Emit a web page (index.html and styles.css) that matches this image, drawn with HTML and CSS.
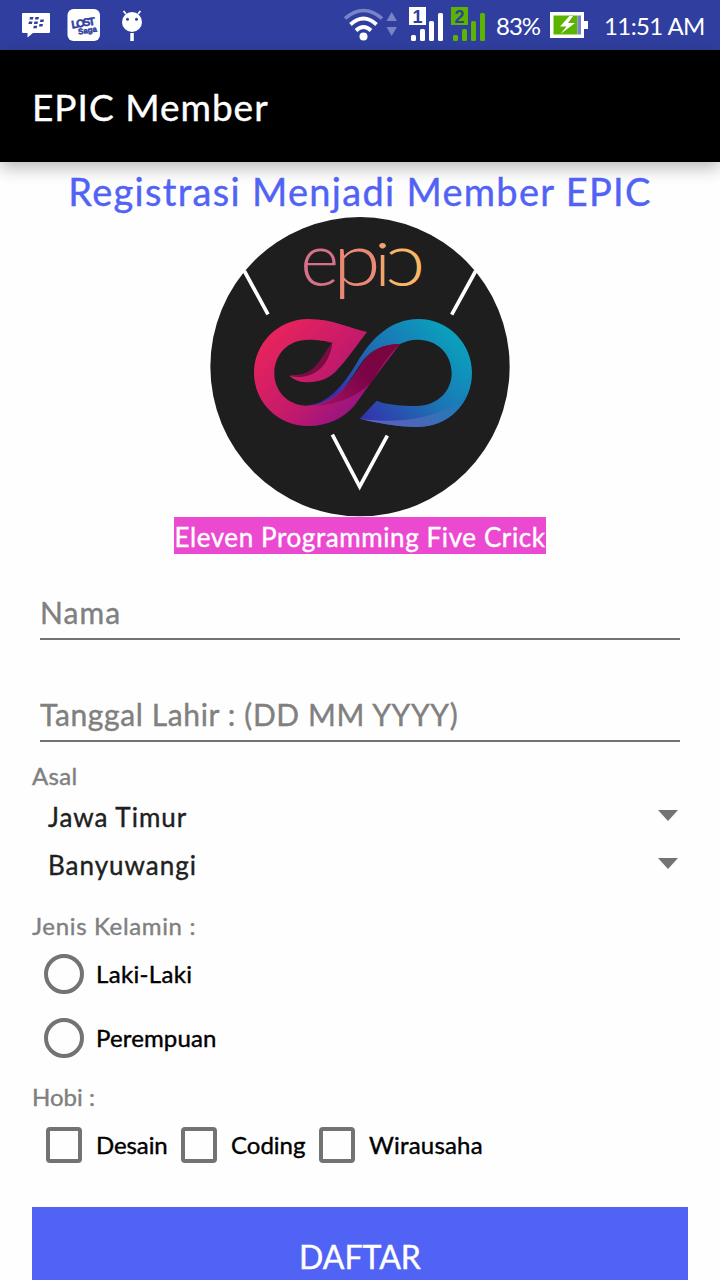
FILE: index.html
```html
<!DOCTYPE html>
<html lang="id">
<head>
<meta charset="utf-8">
<title>EPIC Member</title>
<link rel="stylesheet" href="styles.css">
</head>
<body>
<div class="status">
  <svg class="notifications" width="160" height="50" viewBox="0 0 160 50">
    <path fill="#fff" d="M23 13h26q1 0 1 1v18q0 1-1 1H33l-5.500 4.500V33H23q-1 0-1-1V14q0-1 1-1z"/>
    <g fill="#303f9f"><path d="M30 17h3.500l-.6 2.500h-3.500zM35.500 17H39l-.6 2.500h-3.500zM29 21.500h3.500l-.6 2.500h-3.500zM34.500 21.500H38l-.6 2.500h-3.500zM40.500 19.500H44l-.6 2.500h-3.500zM39.500 24H43l-.6 2.500h-3.500zM33.800 25.700h3.500l-.6 2.500h-3.500z"/></g>
    <rect x="67.500" y="9" width="32.500" height="32" rx="6" fill="#fff"/>
    <g transform="rotate(-9 84 25)" class="game"><text x="71.500" y="26.500" textLength="24">LOST</text><text x="77" y="33.500" class="game-sub" textLength="19">Saga</text></g>
    <g fill="#fff"><circle cx="132" cy="22" r="10"/><rect x="130.300" y="33" width="3.500" height="8"/><path d="M126 14l-2.500-3M138 14l2.500-3" stroke="#fff" stroke-width="1.800"/></g>
    <circle cx="127.500" cy="19.300" r="1.500" fill="#303f9f"/><circle cx="136.500" cy="19.300" r="1.500" fill="#303f9f"/>
  </svg>
  <svg class="signals" width="150" height="50" viewBox="340 0 150 50">
    <g fill="none" stroke-linecap="butt">
      <path d="M345 18.500q18.500-16 37 0" stroke="#7883c8" stroke-width="3.500"/>
      <path d="M350.500 24.500q13-12 26 0M356 30.500q7.500-7 15 0" stroke="#fff" stroke-width="3.800"/>
    </g>
    <circle cx="363.500" cy="36.500" r="4" fill="#fff"/>
    <path fill="#7883c8" d="M386.500 21l5.200-9 5.200 9zM386.500 27h10.400l-5.200 9z"/>
    <g fill="#fff"><rect x="409" y="7" width="17" height="18"/><rect x="411" y="35" width="5" height="6" rx="1.500"/><rect x="420" y="29" width="5" height="12" rx="1.500"/><rect x="429" y="21" width="5" height="20" rx="1.500"/><rect x="438" y="13" width="5" height="28" rx="1.500"/></g>
    <g fill="#5cb400"><rect x="451" y="7" width="17" height="18"/><rect x="453" y="35" width="5" height="6" rx="1.500"/><rect x="462" y="29" width="5" height="12" rx="1.500"/><rect x="471" y="21" width="5" height="20" rx="1.500"/><rect x="480" y="13" width="5" height="28" rx="1.500"/></g>
    <text class="sim" x="417.500" y="22.500">1</text><text class="sim" x="459.500" y="22.500">2</text>
  </svg>
  <span class="percent">83%</span>
  <svg class="battery" width="38" height="28" viewBox="550 11 38 28">
    <path fill="#fff" d="M550 12h34v9h4v8h-4v9h-34z"/><path fill="#5cb400" d="M553.500 15.500h24v19h-24z"/><path fill="#7883c8" d="M577.500 15.500h3.500v19h-3.500z"/>
    <path fill="#fff" d="M569.500 16l-9.500 10.500h6.500l-6 7.500L575 23h-7l5-7z"/>
  </svg>
  <span class="clock">11:51 AM</span>
</div>
<header class="appbar"><span class="app-title">EPIC Member</span></header>
<main class="page">
  <h1 class="heading"><span>Registrasi Menjadi Member EPIC</span></h1>
  <svg class="logo" width="300" height="300" viewBox="30 21 900 900">
    <defs>
      <linearGradient id="pink" gradientUnits="userSpaceOnUse" x1="190" y1="380" x2="470" y2="640"><stop offset="0" stop-color="#e9245c"/><stop offset=".55" stop-color="#c41a6b"/><stop offset="1" stop-color="#8e1385"/></linearGradient>
      <linearGradient id="blue" gradientUnits="userSpaceOnUse" x1="770" y1="370" x2="490" y2="640"><stop offset="0" stop-color="#09a2bd"/><stop offset=".5" stop-color="#1c73b4"/><stop offset="1" stop-color="#352fab"/></linearGradient>
      <linearGradient id="ribbon" gradientUnits="userSpaceOnUse" x1="360" y1="600" x2="580" y2="410"><stop offset="0" stop-color="#a01362"/><stop offset=".6" stop-color="#7c0346"/><stop offset="1" stop-color="#78063c"/></linearGradient>
      <linearGradient id="shine" gradientUnits="userSpaceOnUse" x1="490" y1="630" x2="800" y2="560"><stop offset="0" stop-color="#5b62bd"/><stop offset=".5" stop-color="#4a67b8"/><stop offset="1" stop-color="#187eb7"/></linearGradient>
    </defs>
    <circle cx="480" cy="470" r="449" fill="#1e1e1e"/>
    <path d="M133 183L204 313M827 183L755 314M397 674L479 830L562 677" fill="none" stroke="#fff" stroke-width="11"/>
    <g class="word"><text fill="#d77089" transform="translate(301 229)">e</text><text fill="#ea8a75" transform="translate(399 229) scale(1.16 1)">p</text><text fill="#f3a46d" transform="translate(523 229) scale(1 .82)">i</text><text fill="#f8b766" transform="translate(676 229) scale(-1.12 1)">c</text></g>
    <path fill="url(#blue)" d="M320 587C385 583 430 525 470 460C510 390 570 327 655 327C745 327 816 400 816 488C816 580 745 651 650 651C590 650 535 638 479 626L530 572C560 585 610 588 650 588C710 588 755 545 755 490C755 430 710 389 655 389C630 389 615 395 600 402C530 405 500 430 470 480C430 540 400 587 345 592Z"/>
    <path fill="url(#shine)" d="M479 626C620 645 730 620 800 553C775 612 725 651 650 651C590 650 535 640 479 626Z"/>
    <path fill="url(#pink)" d="M501 366C455 357 400 327 325 327C235 327 162 400 162 488C162 577 235 648 325 648C385 648 430 625 465 585C490 550 500 535 516 513L600 402C535 402 505 430 477 475C443 530 395 587 320 587C265 587 223 545 223 490C223 432 265 389 325 389C355 389 375 393 397 398C380 450 350 497 268 497C285 512 305 517 325 517C355 516 385 507 405 487C440 450 475 400 501 366Z"/>
    <path fill="url(#ribbon)" d="M600 402C535 402 505 430 477 475C443 530 405 577 340 588C415 583 470 560 514 518C540 475 570 430 600 402Z"/>
    <path fill="#780d43" d="M397 398C360 440 350 500 268 497C310 508 350 495 375 460C388 440 395 420 397 398Z"/>
  </svg>
  <div class="tagline"><span>Eleven Programming Five Crick</span></div>
  <form class="form">
    <div class="field name"><span>Nama</span></div>
    <div class="field birth"><span>Tanggal Lahir : (DD MM YYYY)</span></div>
    <div class="label origin">Asal</div>
    <div class="select"><span class="province">Jawa Timur</span><i class="arrow"></i></div>
    <div class="select"><span class="city">Banyuwangi</span><i class="arrow"></i></div>
    <div class="label gender">Jenis Kelamin :</div>
    <div class="option"><i class="radio"></i><span class="male">Laki-Laki</span></div>
    <div class="option"><i class="radio"></i><span class="female">Perempuan</span></div>
    <div class="label hobby">Hobi :</div>
    <div class="checks">
      <div class="check design"><i class="box"></i><span>Desain</span></div>
      <div class="check coding"><i class="box"></i><span>Coding</span></div>
      <div class="check business"><i class="box"></i><span>Wirausaha</span></div>
    </div>
    <div class="submit"><span>DAFTAR</span></div>
  </form>
</main>
</body>
</html>
```
FILE: styles.css
```css
* { box-sizing: border-box; }
body { margin: 0; width: 720px; height: 1280px; overflow: hidden; background: #fefefe; font-family: Lato, "Noto Sans", sans-serif; white-space: nowrap; -webkit-text-stroke: 0.4px currentColor; }
svg { display: block; flex: none; -webkit-text-stroke: 0; }
.status { height: 50px; background: #303f9f; color: #fff; display: flex; align-items: center; font-size: 24px; line-height: 50px; -webkit-text-stroke: 0; }
.signals { margin-left: 180px; }
.percent { width: 60px; padding: 1px 0 0 6px; letter-spacing: -1px; }
.clock { padding: 1px 0 0 16px; letter-spacing: -0.6px; }
.sim { font: bold 18px "Liberation Sans", sans-serif; text-anchor: middle; fill: #303f9f; }
.game { font: bold 11px "Liberation Sans", sans-serif; fill: #303f9f; stroke: #303f9f; stroke-width: .5px; }
.game-sub { font-size: 8px; }
.appbar { height: 112px; background: #000; color: #fff; padding-left: 32px; font-size: 37px; line-height: 113px; box-shadow: 0 6px 16px rgba(0,0,0,.27); }
.app-title { letter-spacing: 1px; }
.page { display: flex; flex-direction: column; align-items: center; }
.heading { margin: 0; height: 55px; color: #5163f5; font-size: 38px; line-height: 58px; font-weight: 400; letter-spacing: 1.3px; }
.word { font: 300 224px Lato, sans-serif; }
.word text { overflow: visible; }
.tagline { width: 372px; height: 37px; background: #ec49d1; color: #fff; font-size: 26px; line-height: 40px; text-align: center; letter-spacing: 0.6px; }
.form { width: 656px; color: #808080; font-size: 24px; }
.field { margin: 0 8px; border-bottom: 2px solid #737373; font-size: 30px; }
.name { height: 86px; padding-top: 40px; line-height: 36px; letter-spacing: 1.1px; }
.birth { height: 102px; padding-top: 56px; line-height: 36px; letter-spacing: 0.63px; }
.origin { height: 51px; padding-top: 19px; line-height: 30px; letter-spacing: 0.3px; }
.select { height: 48px; padding: 0 10px 0 16px; display: flex; justify-content: space-between; align-items: center; color: #1f1f1f; font-size: 26px; letter-spacing: 1px; }
.arrow { margin-bottom: 4px; border: 10px solid transparent; border-top: 11px solid #737373; border-bottom: 0; }
.gender { height: 53px; padding-top: 22px; line-height: 30px; letter-spacing: 0.65px; }
.option { height: 64px; display: flex; align-items: center; padding-left: 12px; color: #000; }
.option span, .check span { margin-bottom: 2px; }
.male { letter-spacing: 0.35px; }
.female { letter-spacing: 0.15px; }
.radio { width: 40px; height: 40px; margin-right: 12px; border: 4px solid #737373; border-radius: 50%; }
.hobby { height: 43px; padding-top: 12px; line-height: 30px; }
.checks { display: flex; height: 64px; padding-left: 14px; color: #000; }
.check { display: flex; align-items: center; }
.box { width: 36px; height: 36px; margin-right: 14px; border: 4px solid #737373; border-radius: 4px; }
.design { width: 135px; letter-spacing: -0.1px; }
.coding { width: 138px; }
.business { letter-spacing: 0.2px; }
.submit { height: 100px; margin-top: 30px; background: #5163f5; color: #fff; font-size: 32px; line-height: 99px; text-align: center; }
```
